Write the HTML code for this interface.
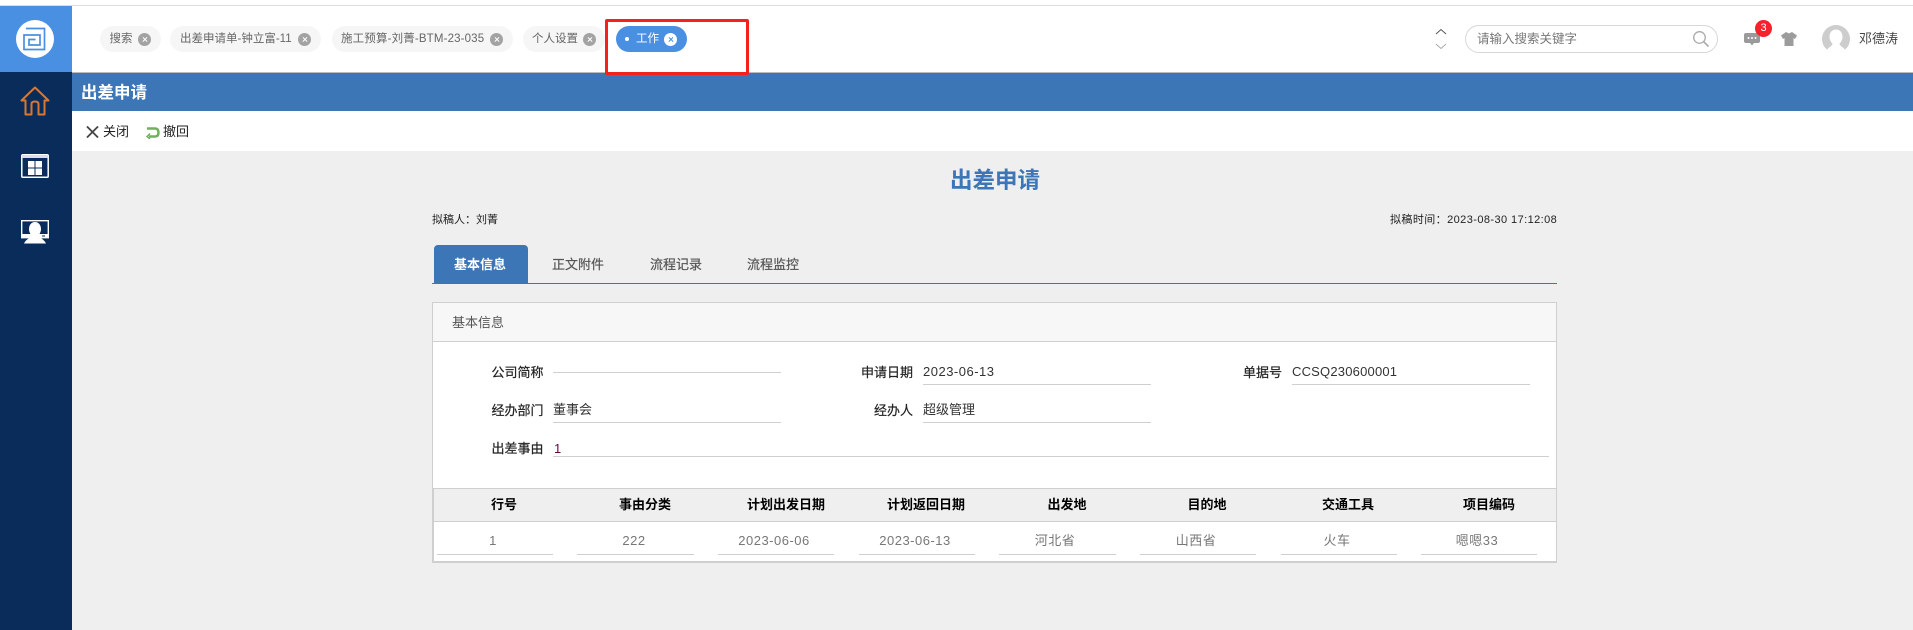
<!DOCTYPE html>
<html lang="zh"><head><meta charset="utf-8"><title>出差申请</title>
<style>
html,body{margin:0;padding:0;width:1913px;height:630px;overflow:hidden;background:#efefef;font-family:"Liberation Sans","Noto Sans CJK SC",sans-serif}
.a{position:absolute}
.t{position:absolute;white-space:nowrap;line-height:20px;height:20px}
.chip{position:absolute;top:26px;height:26px;border-radius:13px;background:#f6f6f6}
.ct{font-size:11.5px;color:#666;top:29px}
.x{position:absolute;top:32.5px;width:13px;height:13px;border-radius:50%;background:#a3a3a3}
.x:before,.x:after{content:"";position:absolute;left:3.5px;top:6px;width:6px;height:1.2px;background:#fff;transform:rotate(45deg)}
.x:after{transform:rotate(-45deg)}
.x.w{background:#fff}
.x.w:before,.x.w:after{background:#4a90e2}
.l{font-size:13px;color:#222;-webkit-text-stroke:.2px #222}
.v{font-size:13px;color:#333;letter-spacing:.5px}
.u{position:absolute;height:1px;background:#cfcfcf}
.h{font-size:13px;font-weight:bold;color:#000;text-align:center;width:140px;top:495px}
.c{font-size:13px;color:#777;text-align:center;width:116px;top:531px;letter-spacing:.5px}
.tab{font-size:13px;color:#555;top:255px;-webkit-text-stroke:.2px #555}
</style></head><body>
<div class="a" style="left:0;top:0;width:1913px;height:5px;background:#fff"></div>
<div class="a" style="left:0;top:5px;width:1913px;height:1px;background:#ddd"></div>
<div class="a" style="left:0;top:6px;width:1913px;height:66px;background:#fff"></div>
<div class="a" style="left:72px;top:72px;width:1841px;height:1px;background:#bbb"></div>
<div class="a" style="left:0;top:6px;width:72px;height:66px;background:#4a90e2"></div>
<div class="a" style="left:0;top:72px;width:72px;height:558px;background:#0a2c5a"></div>
<div class="a" style="left:16px;top:20px;width:38px;height:38px;border-radius:50%;background:#fff"></div>
<svg class="a" style="left:22px;top:27px" width="24" height="24" viewBox="0 0 24 24" fill="none" stroke="#4a90e2" stroke-width="1.7">
<path d="M4 1.500H22.500V22.500H2V8H18V18H7V12.500H13.500"/></svg>
<svg class="a" style="left:20px;top:86px" width="30" height="30" viewBox="0 0 30 30" fill="none" stroke="#d9772f" stroke-width="2" stroke-linejoin="round">
<path d="M1.500 14.500 15 1.500 28.500 14.500 24.500 14.500 24.500 28.500 18.500 28.500 18.500 18Q18.500 15.500 15 15.500 11.500 15.500 11.500 18L11.500 28.500 5.500 28.500 5.500 14.500Z"/></svg>
<svg class="a" style="left:21px;top:154px" width="28" height="24" viewBox="0 0 28 24">
<rect x=".8" y=".8" width="26.400" height="22.400" rx="1" fill="none" stroke="#fff" stroke-width="1.500"/><rect x="1" y="1" width="26" height="3" fill="#dde"/>
<rect x="7" y="7" width="6.500" height="6.500" fill="#fff"/><rect x="14.500" y="7" width="6.500" height="6.500" fill="#fff"/><rect x="7" y="14.500" width="6.500" height="6.500" fill="#fff"/><rect x="14.500" y="14.500" width="6.500" height="6.500" fill="#fff"/></svg>
<svg class="a" style="left:21px;top:220px" width="28" height="25" viewBox="0 0 28 25">
<rect x=".7" y=".7" width="26.600" height="17" fill="none" stroke="#fff" stroke-width="1.400"/><rect x="0" y="14" width="28" height="4" fill="#fff"/>
<path d="M14 2C10.500 2 8 5 8 9C8 12 9.500 14 10.500 15.500C10 17.500 4.500 19.500 3 23.500H25C23.500 19.500 18 17.500 17.500 15.500C18.500 14 20 12 20 9C20 5 17.500 2 14 2Z" fill="#fff"/><rect x="21" y="15.500" width="3" height="1" fill="#0a2c5a"/></svg>

<div class="chip" style="left:100px;width:61px"></div><div class="t ct" style="left:109.500px">搜索</div><div class="x" style="left:138px"></div>
<div class="chip" style="left:170px;width:151px"></div><div class="t ct" style="left:180px">出差申请单-钟立富-11</div><div class="x" style="left:298px"></div>
<div class="chip" style="left:332px;width:181px"></div><div class="t ct" style="left:341px;letter-spacing:.15px">施工预算-刘菁-BTM-23-035</div><div class="x" style="left:490px"></div>
<div class="chip" style="left:523px;width:82px"></div><div class="t ct" style="left:532px">个人设置</div><div class="x" style="left:583px"></div>
<div class="chip" style="left:616px;width:71px;background:#4a90e2"></div>
<div class="a" style="left:625px;top:37px;width:4px;height:4px;border-radius:50%;background:#fff"></div>
<div class="t ct" style="left:636px;color:#fff">工作</div>
<div class="x w" style="left:664px"></div>

<svg class="a" style="left:1434px;top:27px" width="14" height="24" viewBox="0 0 14 24" fill="none"><path d="M2 7 7 2.500 12 7" stroke="#555"/><path d="M2 17 7 21.500 12 17" stroke="#aaa"/></svg>
<div class="a" style="left:1465px;top:25px;width:251px;height:26px;border:1px solid #d6d6d6;border-radius:14px;background:#fff"></div>
<div class="t" style="left:1477px;top:29px;font-size:12.500px;color:#777">请输入搜索关键字</div>
<svg class="a" style="left:1692px;top:30px" width="18" height="18" viewBox="0 0 18 18" fill="none" stroke="#aaa" stroke-width="1.300"><circle cx="7.500" cy="7.500" r="5.800"/><path d="M12 12 16.500 16.500" stroke-width="1.600"/></svg>
<svg class="a" style="left:1744px;top:33px" width="16" height="13" viewBox="0 0 16 13"><path d="M2 0H14Q16 0 16 2V8Q16 10 14 10H10L8 12.500 6 10H2Q0 10 0 8V2Q0 0 2 0Z" fill="#9a9a9a"/><circle cx="4.500" cy="5" r="1" fill="#fff"/><circle cx="8" cy="5" r="1" fill="#fff"/><circle cx="11.500" cy="5" r="1" fill="#fff"/></svg>
<div class="a" style="left:1755px;top:20px;width:17px;height:17px;border-radius:50%;background:#f5222d;color:#fff;font-size:11px;line-height:17px;text-align:center">3</div>
<svg class="a" style="left:1781px;top:32px" width="16" height="14" viewBox="0 0 16 14"><path d="M5 0 8 1.500 11 0 16 3.500 14 7 12.500 6V14H3.500V6L2 7 0 3.500Z" fill="#9c9c9c"/></svg>
<svg class="a" style="left:1822px;top:25px" width="28" height="28" viewBox="0 0 28 28"><circle cx="14" cy="14" r="14" fill="#cdcdcd"/><path d="M14 4.500C9.500 4.500 7.500 8 7.500 12C7.500 15 9.500 17.500 10.500 19C10 21 7 22 5 24.500C7.500 26.800 10.500 28 14 28C17.500 28 20.500 26.800 23 24.500C21 22 18 21 17.500 19C18.500 17.500 20.500 15 20.500 12C20.500 8 18.500 4.500 14 4.500Z" fill="#fff"/></svg>
<div class="t" style="left:1859px;top:29px;font-size:13px;color:#444">邓德涛</div>

<div class="a" style="left:72px;top:73px;width:1841px;height:38px;background:#3d76b6"></div>
<div class="a" style="left:605px;top:19px;width:138px;height:50px;border:3px solid #f5211c;border-radius:2px"></div>
<div class="t" style="left:81px;top:83px;font-size:16.500px;font-weight:bold;color:#fff">出差申请</div>
<div class="a" style="left:72px;top:111px;width:1841px;height:40px;background:#fff"></div>
<svg class="a" style="left:86px;top:126px" width="13" height="12" viewBox="0 0 13 12" fill="none" stroke="#444" stroke-width="1.800"><path d="M1 .5 12 11.500M12 .5 1 11.500"/></svg>
<div class="t" style="left:103px;top:122px;font-size:13px;color:#222">关闭</div>
<svg class="a" style="left:146px;top:126px" width="14" height="13" viewBox="0 0 14 13" fill="none" stroke="#6eb05e" stroke-width="2.500"><path d="M1 2.500H9Q12.500 2.500 12.500 6.500 12.500 10.500 9 10.500H3"/><path d="M4 7.500 1 10.500 4 13" stroke-width="1.500"/></svg>
<div class="t" style="left:163px;top:122px;font-size:13px;color:#222">撤回</div>

<div class="t" style="left:950px;top:171px;font-size:22.500px;line-height:20px;font-weight:bold;color:#3d76b6">出差申请</div>
<div class="t" style="left:432px;top:210px;font-size:11px;color:#222">拟稿人：刘菁</div>
<div class="t" style="left:1390px;top:210px;font-size:11px;color:#222;letter-spacing:.42px">拟稿时间：2023-08-30 17:12:08</div>

<div class="a" style="left:434px;top:245px;width:94px;height:38px;background:#3d76b6;border-radius:4px 4px 0 0"></div>
<div class="a" style="left:432px;top:283px;width:1125px;height:1px;background:#3d76b6"></div>
<div class="t tab" style="left:454px;color:#fff;font-weight:bold;-webkit-text-stroke:0">基本信息</div>
<div class="t tab" style="left:552px">正文附件</div>
<div class="t tab" style="left:650px">流程记录</div>
<div class="t tab" style="left:747px">流程监控</div>

<div class="a" style="left:432px;top:302px;width:1123px;height:258px;border:1px solid #cfcfcf;border-bottom:2px solid #cfcfcf;background:#fff"></div>
<div class="a" style="left:433px;top:303px;width:1123px;height:38px;background:#f7f7f7;border-bottom:1px solid #cfcfcf"></div>
<div class="t" style="left:452px;top:313px;font-size:13px;color:#555">基本信息</div>

<div class="t l" style="left:491.500px;top:363px">公司简称</div>
<div class="u" style="left:553px;top:372px;width:228px"></div>
<div class="t l" style="left:861px;top:363px">申请日期</div>
<div class="t v" style="left:923px;top:362px">2023-06-13</div>
<div class="u" style="left:923px;top:384px;width:228px"></div>
<div class="t l" style="left:1243px;top:363px">单据号</div>
<div class="t v" style="left:1292px;top:362px;letter-spacing:.2px">CCSQ230600001</div>
<div class="u" style="left:1292px;top:384px;width:238px"></div>

<div class="t l" style="left:491.500px;top:401px">经办部门</div>
<div class="t v" style="left:553px;top:400px;letter-spacing:0">董事会</div>
<div class="u" style="left:553px;top:422px;width:228px"></div>
<div class="t l" style="left:874px;top:401px">经办人</div>
<div class="t v" style="left:923px;top:400px;letter-spacing:0">超级管理</div>
<div class="u" style="left:923px;top:422px;width:228px"></div>

<div class="t l" style="left:491.500px;top:439px">出差事由</div>
<div class="t v" style="left:554px;top:439px;color:#700040">1</div>
<div class="u" style="left:553px;top:456px;width:996px"></div>

<div class="a" style="left:432px;top:488px;width:1124px;height:32px;background:#efefef;border-top:1px solid #cfcfcf;border-bottom:1px solid #cfcfcf"></div>
<div class="a" style="left:432px;top:488px;width:2px;height:74px;background:#cfcfcf"></div>
<div class="a" style="left:1556px;top:488px;width:1px;height:74px;background:#cfcfcf"></div>

<div class="t h" style="left:434px">行号</div>
<div class="t h" style="left:575px">事由分类</div>
<div class="t h" style="left:716px">计划出发日期</div>
<div class="t h" style="left:856px">计划返回日期</div>
<div class="t h" style="left:997px">出发地</div>
<div class="t h" style="left:1137px">目的地</div>
<div class="t h" style="left:1278px">交通工具</div>
<div class="t h" style="left:1419px">项目编码</div>

<div class="t c" style="left:435px">1</div><div class="u" style="left:437px;top:554px;width:116px"></div>
<div class="t c" style="left:576px">222</div><div class="u" style="left:577px;top:554px;width:117px"></div>
<div class="t c" style="left:716px">2023-06-06</div><div class="u" style="left:718px;top:554px;width:116px"></div>
<div class="t c" style="left:857px">2023-06-13</div><div class="u" style="left:859px;top:554px;width:116px"></div>
<div class="t c" style="left:997px">河北省</div><div class="u" style="left:999px;top:554px;width:117px"></div>
<div class="t c" style="left:1138px">山西省</div><div class="u" style="left:1140px;top:554px;width:116px"></div>
<div class="t c" style="left:1279px">火车</div><div class="u" style="left:1281px;top:554px;width:116px"></div>
<div class="t c" style="left:1419px">嗯嗯33</div><div class="u" style="left:1421px;top:554px;width:116px"></div>
</body></html>
